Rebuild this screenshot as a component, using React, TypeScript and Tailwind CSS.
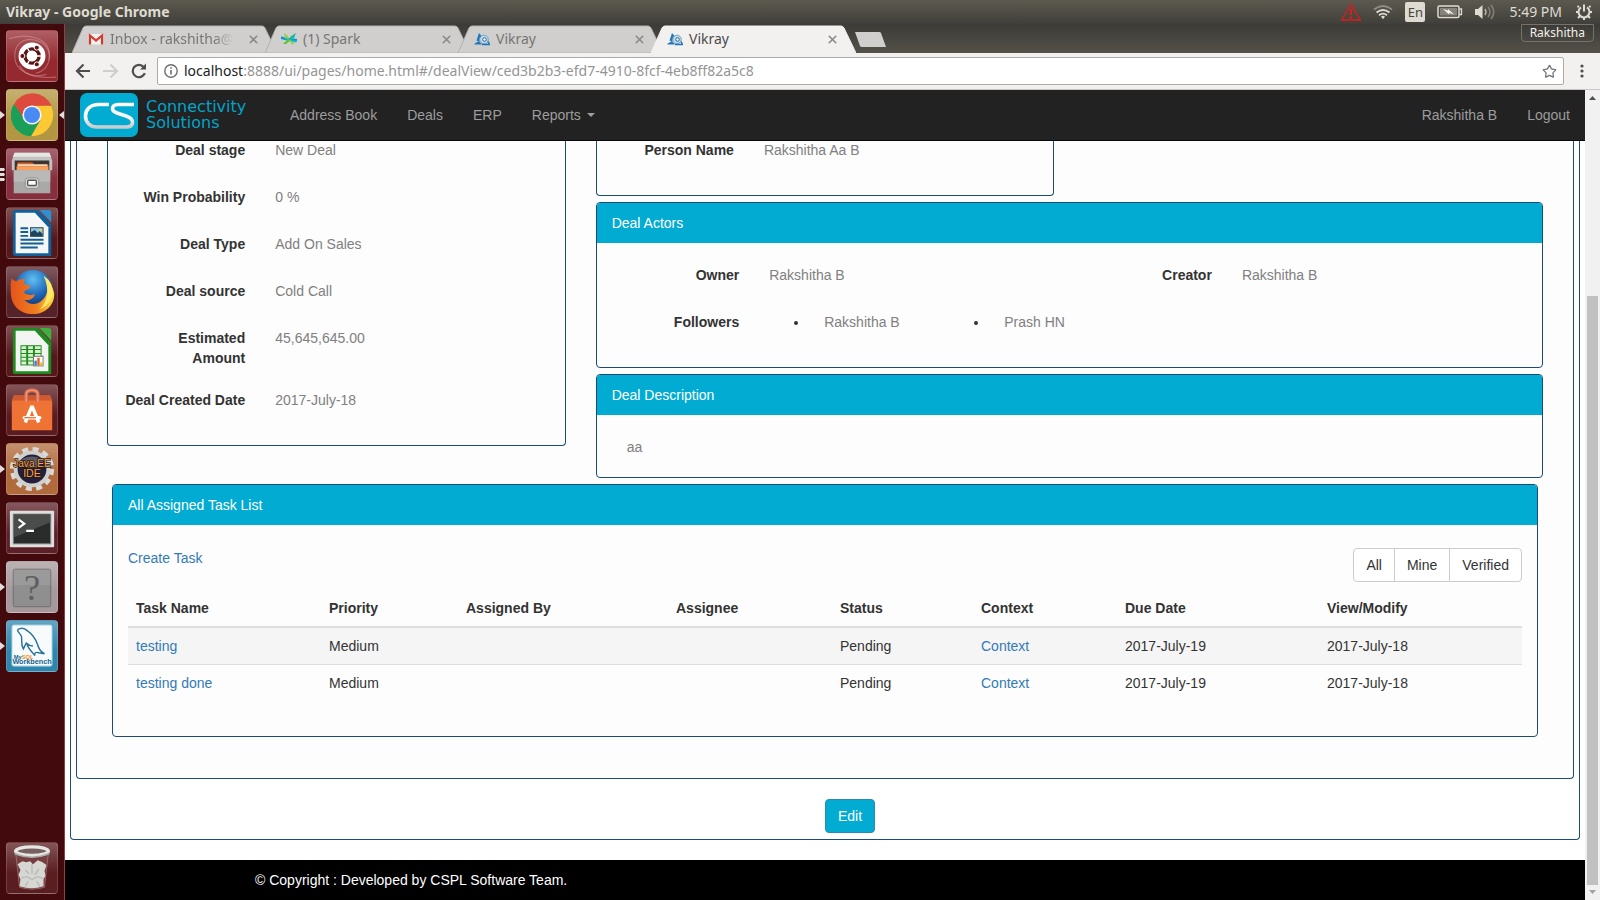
import type { ReactNode } from "react";
import { Star, X } from "lucide-react";

const uiFont = "font-['Noto_Sans','Open_Sans',sans-serif]";

/* ---------- launcher icons ---------- */

function UbuntuIcon() {
  return (
    <svg viewBox="0 0 52 52" className="h-full w-full">
      <g fill="none" stroke="#e9b5b5" strokeOpacity=".4" strokeWidth="1.2">
        <path d="M2 8C20 2 45 6 44 26c0 9-5 16-14 18" />
        <path d="M8 26C8 12 20 4 36 12c6 4 9 10 8 18" />
        <path d="M8 26c0 16 16 24 43 22" />
        <path d="M13 36c5 9 16 13 28 9" />
      </g>
      <circle cx="26" cy="26" r="14" fill="#fff" />
      <circle cx="26" cy="26" r="7.4" fill="none" stroke="#5e1414" strokeWidth="3.6" />
      <g stroke="#fff" strokeWidth="1.5">
        <path d="M26 26L37 26M26 26L20.5 16.5M26 26L20.5 35.5" />
      </g>
      <circle cx="26" cy="26" r="5.4" fill="#fff" />
      <g fill="#5e1414" stroke="#fff" strokeWidth="1">
        <circle cx="16" cy="26" r="2.6" />
        <circle cx="31" cy="17.3" r="2.6" />
        <circle cx="31" cy="34.7" r="2.6" />
      </g>
    </svg>
  );
}

function ChromeIcon() {
  return (
    <svg viewBox="0 0 52 52" className="h-full w-full">
      <circle cx="26" cy="26" r="22" fill="#fcc934" />
      <path d="M26 26L7 15A22 22 0 0 0 25 48L35 31z" fill="#1b9e58" />
      <path d="M26 26L7 15A22 22 0 0 1 46.500 16.500L26 16.500z" fill="#dd4b3e" />
      <path d="M7.500 14.500L17.500 30 20 16.500H40z" fill="#dd4b3e" />
      <path d="M7 15L17.500 31 L25 48A22 22 0 0 1 7 15z" fill="#1b9e58" />
      <circle cx="26" cy="26" r="10" fill="#f5f5f5" />
      <circle cx="26" cy="26" r="8.300" fill="#4a8af4" />
    </svg>
  );
}

function FilesIcon() {
  return (
    <svg viewBox="0 0 52 52" className="h-full w-full">
      <path d="M8 4h36l3 8v10H5V12z" fill="#c3c3c1" />
      <path d="M8 4h36l2 4H6z" fill="#e6e6e4" />
      <path d="M8 12h36v12H8z" fill="#3d3430" />
      <path d="M11 14h15l3 2h14v8H10z" fill="#d9622b" />
      <path d="M10 18h33v6H10z" fill="#f6a15d" />
      <path d="M11 16h31v1.500H11z" fill="#fff1dc" />
      <path d="M7 22h38v24H7z" fill="#a9a9a7" />
      <path d="M7 22h38v12H7z" fill="#b9b9b7" />
      <rect x="19" y="30" width="14" height="11" rx="3" fill="#d6d6d4" stroke="#8f8f8d" />
      <rect x="21.500" y="32.500" width="9" height="5.500" rx="1" fill="#fff" stroke="#555" strokeWidth="1.400" />
    </svg>
  );
}

function WriterIcon() {
  return (
    <svg viewBox="0 0 52 52" className="h-full w-full">
      <path d="M9 2h23l14 15v33H9q-3 0-3-3V5q0-3 3-3z" fill="#0f609b" />
      <path d="M9 5h20l14 15v27H9z" fill="#f5f6f6" />
      <path d="M34 2h9q3 0 3 3v10z" fill="#2f8fd0" />
      <g stroke="#145f97" strokeWidth="2">
        <path d="M14 21h8M14 25h8M14 29h8M14 33h24M14 37h24M14 41h18" />
      </g>
      <rect x="24.500" y="20.500" width="13" height="9" fill="#8ec8ec" stroke="#2b4257" />
      <path d="M25 29v-4l4-2 3 3 2-2 3 3v2z" fill="#20435c" />
      <circle cx="35" cy="23" r="1.500" fill="#f3cf45" />
    </svg>
  );
}

function FirefoxIcon() {
  return (
    <svg viewBox="0 0 52 52" className="h-full w-full">
      <defs>
        <radialGradient id="ffGlobe" cx=".5" cy=".25" r=".7">
          <stop offset="0" stopColor="#5ec0f2" />
          <stop offset=".6" stopColor="#1f66b8" />
          <stop offset="1" stopColor="#12356f" />
        </radialGradient>
        <linearGradient id="ffFox" x1="0" y1="0" x2="1" y2="0">
          <stop offset="0" stopColor="#e4541b" />
          <stop offset=".6" stopColor="#f08020" />
          <stop offset="1" stopColor="#ffe13e" />
        </linearGradient>
      </defs>
      <circle cx="27" cy="23" r="20" fill="url(#ffGlobe)" />
      <path
        d="M5 12c1 1 3 3 5 3 2-2 6-3 9-2-2 2-2 4-1 5l5 1c2 1 1 3-1 4-3 1-4 2-4 4 3 2 7 3 11 1-1 5-6 7-11 6 4 5 12 6 17 2 8-6 9-16 5-23 5 4 8 9 9 14 1 12-9 22-22 22C13 49 4 39 4 27c0-6-1-9 1-15z"
        fill="url(#ffFox)"
      />
      <path d="M38 9c8 5 11 13 9 21-2 7-7 12-13 14 8-7 11-20 4-35z" fill="#ffe866" />
    </svg>
  );
}

function CalcIcon() {
  return (
    <svg viewBox="0 0 52 52" className="h-full w-full">
      <path d="M9 2h23l14 15v33H9q-3 0-3-3V5q0-3 3-3z" fill="#1f8a1f" />
      <path d="M9 5h20l14 15v27H9z" fill="#f3f5f3" />
      <path d="M34 2h9q3 0 3 3v10z" fill="#3fb03a" />
      <rect x="14" y="20" width="22" height="21" fill="#1f8a1f" />
      <g fill="#d9f2d0">
        <path d="M15 21h5v3h-5zM22 21h5v3h-5zM29 21h6v3h-6zM15 25h5v3h-5zM22 25h5v3h-5zM29 25h6v3h-6zM15 29h5v3h-5zM22 29h5v3h-5zM29 29h6v3h-6zM15 33h5v3h-5zM22 33h5v3h-5zM15 37h5v3h-5zM22 37h5v3h-5z" />
      </g>
      <rect x="27.500" y="31.500" width="10" height="10" fill="#fff" stroke="#777" />
      <path d="M28.500 36h2.500v5h-2.500z" fill="#2a83d0" />
      <path d="M31.500 33h2.500v8h-2.500z" fill="#e8641e" />
      <path d="M34.500 38h2.500v3h-2.500z" fill="#f0b81c" />
    </svg>
  );
}

function SoftwareIcon() {
  return (
    <svg viewBox="0 0 52 52" className="h-full w-full">
      <path d="M7 11h38l2 7v29H5V18z" fill="#ee7334" />
      <path d="M7 11h38l2 5H5z" fill="#cf5a30" />
      <path d="M20 18V10q0-4.500 6-4.500t6 4.500v8" fill="none" stroke="#d96c4c" strokeWidth="4" />
      <path d="M20 18V10q0-4.500 6-4.500t6 4.500v8" fill="none" stroke="#f0957a" strokeWidth="1.500" />
      <g stroke="#fff" strokeWidth="3.600" fill="none">
        <path d="M19 39L25.500 23h1L33 39" />
        <path d="M18 34H34" strokeLinecap="round" />
      </g>
      <path d="M18 34h12" stroke="#ee7334" strokeWidth="1.400" />
    </svg>
  );
}

function EclipseIcon() {
  return (
    <svg viewBox="0 0 52 52" className="h-full w-full">
      <circle cx="26" cy="26" r="20" fill="none" stroke="#d9d9d7" strokeWidth="6" strokeDasharray="6 4.470" />
      <circle cx="26" cy="26" r="17" fill="#22203a" stroke="#cfcfcd" strokeWidth="4" />
      <ellipse cx="26" cy="19" rx="12" ry="6" fill="#5d5a68" />
      <g fill="#f5a35a" stroke="#2a1608" strokeWidth="1.500" paintOrder="stroke" fontFamily="Liberation Sans, sans-serif" textAnchor="middle">
        <text x="26" y="24" fontSize="10.500">Java EE</text>
        <text x="26" y="34" fontSize="11">IDE</text>
      </g>
    </svg>
  );
}

function TerminalIcon() {
  return (
    <svg viewBox="0 0 52 52" className="h-full w-full">
      <rect x="3" y="8" width="46" height="38" rx="1" fill="#dededc" />
      <rect x="6.500" y="11.500" width="39" height="31" fill="#2a2c2b" stroke="#8b8b8b" />
      <path d="M7 12h38v8L7 36z" fill="#4a4c4b" />
      <path d="M12 17l6 4.500-6 4.500M20 29h8" fill="none" stroke="#fff" strokeWidth="2.200" />
    </svg>
  );
}

function UnknownIcon() {
  return (
    <svg viewBox="0 0 52 52" className="h-full w-full">
      <rect x="6.500" y="7.500" width="39" height="39" rx="2" fill="#8f8f8f" stroke="#6d6d6d" />
      <path d="M7 8h38v16H7z" fill="#9a9a9a" />
      <text x="26" y="39" fontSize="38" textAnchor="middle" fill="#5f5f5f" fontFamily="Liberation Serif, serif">
        ?
      </text>
    </svg>
  );
}

function WorkbenchIcon() {
  return (
    <svg viewBox="0 0 52 52" className="h-full w-full">
      <rect x="5" y="4" width="42" height="43" rx="2" fill="#f8fbfc" stroke="#7ab8d6" />
      <path
        d="M11 9c3-2 7-2 10 1 6 4 9 9 11 15 1 4 3 7 7 9l-6-1c-3-1-5 0-4 3-3-4-6-6-8-11M11 9c0 3 3 4 4 7 1 4-1 8 2 13l3-6c2 2 4 3 7 3"
        fill="none"
        stroke="#2a7297"
        strokeWidth="1.500"
      />
      <g fontFamily="Liberation Sans, sans-serif" fontWeight="700">
        <text x="7" y="39" fontSize="6" fill="#12628c">
          My<tspan fill="#ee9020">SQL</tspan>
        </text>
        <text x="26" y="45" fontSize="7.500" fill="#12628c" textAnchor="middle">
          Workbench
        </text>
      </g>
    </svg>
  );
}

function TrashIcon() {
  return (
    <svg viewBox="0 0 52 52" className="h-full w-full">
      <path d="M9 10l4 36q13 4 26 0l4-36z" fill="#7d4548" fillOpacity=".6" stroke="#a98082" strokeOpacity=".7" />
      <path
        d="M11 22l5-3 4 1 4-1 3 3 5-4 5 2 4 3-2 6 1 5-2 4v7q-12 4-25 0l1-7-2-5 2-5z"
        fill="#d6d7d3"
      />
      <path d="M26 22v10M19 28l4 4M33 27l-4 6M15 36l6-1 5 3 6-3 6 2M22 40l-3 5M31 40l3 5" fill="none" stroke="#b9bbb6" strokeWidth="1.500" />
      <ellipse cx="26" cy="8.500" rx="17" ry="4.500" fill="#77605f" stroke="#e4e6e2" strokeWidth="3.500" />
      <path d="M8 10q18 8 36 0v2q-18 7-36 0z" fill="#a9aba6" />
    </svg>
  );
}

type Tile = { name: string; tone: string; icon: ReactNode; left?: boolean; stack?: boolean; right?: boolean };

const tiles: Tile[] = [
  { name: "Search your computer", tone: "bg-[#942a30]", icon: <UbuntuIcon /> },
  { name: "Google Chrome", tone: "bg-[#b39642]", icon: <ChromeIcon />, left: true, right: true },
  { name: "Files", tone: "bg-[#86303f]", icon: <FilesIcon />, stack: true },
  { name: "LibreOffice Writer", tone: "bg-[#55191c]", icon: <WriterIcon /> },
  { name: "Firefox", tone: "bg-[#55222a]", icon: <FirefoxIcon /> },
  { name: "LibreOffice Calc", tone: "bg-[#55191c]", icon: <CalcIcon /> },
  { name: "Ubuntu Software", tone: "bg-[#5a1c20]", icon: <SoftwareIcon /> },
  { name: "Eclipse", tone: "bg-[#b06a3c]", icon: <EclipseIcon />, left: true },
  { name: "Terminal", tone: "bg-[#5c2029]", icon: <TerminalIcon /> },
  { name: "Unknown application", tone: "bg-[#a5999b]", icon: <UnknownIcon />, left: true },
  { name: "MySQL Workbench", tone: "bg-[#2f86ad]", icon: <WorkbenchIcon />, left: true },
];

function LauncherTile({ tile }: { tile: Tile }) {
  return (
    <button
      aria-label={tile.name}
      className={`relative block size-[52px] shrink-0 rounded border border-white/15 bg-linear-to-b from-white/25 to-transparent to-60% ${tile.tone}`}
    >
      {tile.icon}
      {tile.left && (
        <svg viewBox="0 0 5 8" className="absolute top-[21px] -left-[7px] h-2 w-[5px]">
          <path d="M0 0l5 4-5 4z" fill="#e3dede" />
        </svg>
      )}
      {tile.stack && (
        <svg viewBox="0 0 5 13" className="absolute top-[19px] -left-[7px] h-[13px] w-[5px]">
          <path d="M0 0h4l1 1.500-1 1.500H0zM0 5h4l1 1.500L4 8H0zM0 10h4l1 1.500-1 1.500H0z" fill="#e3dede" />
        </svg>
      )}
      {tile.right && (
        <svg viewBox="0 0 5 8" className="absolute top-[21px] -right-[7px] h-2 w-[5px]">
          <path d="M5 0L0 4l5 4z" fill="#e3dede" />
        </svg>
      )}
    </button>
  );
}

function Launcher() {
  return (
    <nav aria-label="Launcher" className="flex w-[65px] shrink-0 flex-col gap-[7px] border-r border-[#8d4144] bg-[#420a0c] px-1.5 py-1.5">
      {tiles.map((t) => (
        <LauncherTile key={t.name} tile={t} />
      ))}
      <div className="mt-auto">
        <LauncherTile tile={{ name: "Trash", tone: "bg-[#5a1d20]", icon: <TrashIcon /> }} />
      </div>
    </nav>
  );
}

/* ---------- top panel ---------- */

function TopPanel() {
  return (
    <header
      className={`flex h-6 shrink-0 items-center bg-linear-to-b from-[#5c5a4f] to-[#403f3a] pr-2 pl-1.5 text-[#dfdbd2] ${uiFont}`}
    >
      <h1 className="text-[14px] leading-6 font-bold">Vikray - Google Chrome</h1>
      <div className="ml-auto flex items-center">
        <svg viewBox="0 0 20 18" className="mr-3 h-[18px] w-5" fill="none" stroke="#e01b1b" strokeWidth="1.300">
          <path d="M10 1L19.300 17H.700z" />
          <path d="M10 6v6M10 13.500v2" strokeWidth="2.200" />
        </svg>
        <svg viewBox="0 0 20 16" className="mr-3 h-4 w-5" fill="none" strokeWidth="1.800">
          <path d="M1 5.500Q10-1.500 19 5.500" stroke="#8f8d85" />
          <path d="M3.500 8.500q6.500-5 13 0" stroke="#dfdbd2" />
          <path d="M6 11.200q4-3 8 0" stroke="#dfdbd2" />
          <path d="M8 12.500q2-1.500 4 0l-2 2.700z" fill="#dfdbd2" />
        </svg>
        <span className="mr-3 flex h-5 w-5 items-center justify-center rounded-xs bg-[#dfdbd2] text-[13px] text-[#45443e]">
          En
        </span>
        <svg viewBox="0 0 26 14" className="mr-3 h-3.5 w-[26px]">
          <rect x="1" y="1" width="21" height="11.500" rx="1.500" fill="none" stroke="#dfdbd2" strokeWidth="1.500" />
          <rect x="3" y="3" width="17" height="7.500" fill="#85837b" />
          <path d="M22.500 4h2v5.500h-2" fill="none" stroke="#dfdbd2" strokeWidth="1.300" />
          <path d="M6 4l5 1.500V4l6 5.500-5-1.500v1.500z" fill="#f4f1ea" />
        </svg>
        <svg viewBox="0 0 20 16" className="mr-3.5 h-4 w-5" fill="none">
          <path d="M0 5h3l4.500-4v14L3 11H0z" fill="#dfdbd2" />
          <path d="M10 5q2 3 0 6" stroke="#b3b0a8" strokeWidth="1.500" />
          <path d="M13 3q4 5 0 10M16 1q5.500 7 0 14" stroke="#85837b" strokeWidth="1.500" />
        </svg>
        <time className="mr-3.5 text-[14px] leading-6">5:49 PM</time>
        <svg viewBox="0 0 16 16" className="h-4 w-4" fill="none" stroke="#dfdbd2">
          <path d="M5 3.300a5.500 5.500 0 1 0 6 0" strokeWidth="2" />
          <path d="M8 .500v7" strokeWidth="2" />
          <path d="M2.800 3.200L1.500 1.900M13.200 3.200l1.300-1.300M2.500 8H0M16 8h-2.500M4 12l-2 2M12 12l2 2M8 13.500V16" strokeWidth="2" />
        </svg>
      </div>
    </header>
  );
}

/* ---------- browser chrome ---------- */

function GmailIcon() {
  return (
    <svg viewBox="0 0 16 16" className="size-4">
      <path d="M1 3h14v10.500H1z" fill="#f1f1f1" />
      <path d="M2 13.500V4.500l6 5 6-5v9" fill="none" stroke="#d8392b" strokeWidth="2.200" />
    </svg>
  );
}

function SparkIcon() {
  return (
    <svg viewBox="0 0 16 16" className="size-4">
      <path d="M0 5.500L8 7l8 1v2.500L8 10 0 8z" fill="#0b8fd6" />
      <path d="M0 6l16 3.500-1 2L6 9z" fill="#0fb5c9" />
      <path d="M9 6l6-4-2 5-4 1z" fill="#19b79a" />
      <path d="M2 13l5-5 3 1-5 4z" fill="#5cc23d" />
      <path d="M3 2l4 3 1 3-4-1zM9 9l4 3-1 2-4-4z" fill="#8fd14b" />
    </svg>
  );
}

function FishIcon() {
  return (
    <svg viewBox="0 0 16 16" className="size-4" fill="none">
      <path d="M2.500 9.500L5 2l3 3.500-3 5zM0 13l5-3 3 3.500H1z" fill="#2277ba" />
      <circle cx="10" cy="8.500" r="4.300" fill="#c4dae8" stroke="#6fa3c6" />
      <circle cx="10.500" cy="8.500" r="1.800" fill="#e6f1f7" stroke="#2b6a97" />
      <path d="M8 13.500h7.500l-1.500-3" stroke="#2277ba" strokeWidth="1.500" />
    </svg>
  );
}

function Tab({ icon, title, active, first }: { icon: ReactNode; title: string; active?: boolean; first?: boolean }) {
  return (
    <div className={`relative flex h-7 w-[205px] items-center pr-[17px] pl-4 ${first ? "" : "-ml-3"}`}>
      <svg viewBox="0 0 205 28" preserveAspectRatio="none" className="absolute inset-0 h-full w-full">
        <path
          d="M0 28L11 3Q12 1 14 1H190Q192 1 193 3L205 28z"
          fill={active ? "#f2f1ef" : "#d0cfcd"}
          stroke={active ? "#f2f1ef" : "#b3b1ad"}
        />
      </svg>
      <a
        href="#tab"
        className={`relative flex min-w-0 flex-1 items-center gap-1.5 text-[14px] leading-7 ${active ? "text-[#4b4b4b]" : "text-[#777674]"}`}
      >
        <span className="shrink-0">{icon}</span>
        <span className={`whitespace-nowrap ${first ? "mask-r-from-85%" : ""}`}>{title}</span>
      </a>
      <button aria-label="Close tab" className="relative ml-2 text-[#8a8988]">
        <X size={13} strokeWidth={3} />
      </button>
    </div>
  );
}

function BrowserChrome() {
  return (
    <div className={`shrink-0 ${uiFont}`}>
      <div className="flex h-[29px] items-end bg-linear-to-b from-[#3c3b37] to-[#545149] pl-[7px]">
        <Tab first icon={<GmailIcon />} title="Inbox - rakshitha@" />
        <Tab icon={<SparkIcon />} title="(1) Spark" />
        <Tab icon={<FishIcon />} title="Vikray" />
        <Tab active icon={<FishIcon />} title="Vikray" />
        <button aria-label="New tab" className="-ml-0.5 mb-1.5 h-[15px] w-8 self-end">
          <svg viewBox="0 0 32 15" className="h-full w-full">
            <path d="M1 0H25q1.500 0 2 1L32 15H8q-1.500 0-2-1z" fill="#d0cfcd" />
          </svg>
        </button>
        <button className="mr-1.5 ml-auto h-[18px] self-start rounded-b border border-[#75736b] px-2 text-[12px] leading-4 text-[#f3f1ec]">
          Rakshitha
        </button>
      </div>
      <div className="flex h-[37px] items-center border-b border-[#c9c8c2] bg-[#f2f1ef] pr-4 pl-2.5">
        <button aria-label="Back" className="mr-3">
          <svg viewBox="0 0 16 16" className="size-4" fill="none" stroke="#4d4d4d" strokeWidth="2.200">
            <path d="M15 8H2.500M8.500 1.500L2 8l6.500 6.500" />
          </svg>
        </button>
        <button aria-label="Forward" className="mr-3">
          <svg viewBox="0 0 16 16" className="size-4" fill="none" stroke="#cfcecc" strokeWidth="2.200">
            <path d="M0 8h13.500M7.500 1.500L14 8l-6.500 6.500" />
          </svg>
        </button>
        <button aria-label="Reload" className="mr-2.5">
          <svg viewBox="0 0 16 16" className="size-4" fill="none" stroke="#4d4d4d" strokeWidth="2.200">
            <path d="M13.800 10.200A6.200 6.200 0 1 1 12.700 4" />
            <path d="M15 .500v6H9z" fill="#4d4d4d" stroke="none" />
          </svg>
        </button>
        <div className="flex h-7 flex-1 items-center rounded-xs border border-[#acaba8] bg-white px-1.5 text-[14px]">
          <svg viewBox="0 0 14 14" className="mr-1.5 size-3.5" fill="none" stroke="#6f6f6f" strokeWidth="1.400">
            <circle cx="7" cy="7" r="6.200" />
            <path d="M7 6v4.500M7 3.300v1.500" strokeWidth="1.600" />
          </svg>
          <span className="flex-1 leading-6 text-[#959595]">
            <span className="text-[#222]">localhost</span>
            :8888/ui/pages/home.html#/dealView/ced3b2b3-efd7-4910-8fcf-4eb8ff82a5c8
          </span>
          <button aria-label="Bookmark this page" className="text-[#737373]">
            <Star size={15} strokeWidth={2} />
          </button>
        </div>
        <button aria-label="Menu" className="ml-4">
          <svg viewBox="0 0 4 14" className="h-3.5 w-1" fill="#4d4d4d">
            <circle cx="2" cy="2" r="1.600" />
            <circle cx="2" cy="7" r="1.600" />
            <circle cx="2" cy="12" r="1.600" />
          </svg>
        </button>
      </div>
    </div>
  );
}

/* ---------- application ---------- */

function CsMark() {
  return (
    <svg viewBox="0 0 58 44" className="h-11 w-[58px]">
      <defs>
        <linearGradient id="csStroke" x1="0" y1="0" x2="0" y2="1">
          <stop offset="0" stopColor="#fff" />
          <stop offset=".6" stopColor="#f4f4f4" />
          <stop offset="1" stopColor="#c9ccce" />
        </linearGradient>
      </defs>
      <rect width="58" height="44" rx="7" fill="#02abd1" />
      <path
        d="M29 11.500H19C10 11.500 5.500 16.500 5.500 23S10 34 17 34H46C50.500 34 52.500 32 52.500 29.500S50.500 24.500 46 23L37 20C34 19 32.500 17.500 32.500 15.500S34.500 11.500 38 11.500H54"
        fill="none"
        stroke="url(#csStroke)"
        strokeWidth="3.600"
      />
    </svg>
  );
}

function Navbar() {
  return (
    <nav className="relative flex h-[51px] shrink-0 items-center border-b border-[#080808] bg-[#222] pl-[15px] text-[#9d9d9d]">
      <a href="#home" className="flex w-[195px] items-center gap-2">
        <CsMark />
        <span className="font-['DejaVu_Sans',sans-serif] text-[16px] leading-4 text-[#02a3c8]">
          <span className="block">Connectivity</span>
          <span className="block">Solutions</span>
        </span>
      </a>
      <a href="#address-book" className="px-[15px]">Address Book</a>
      <a href="#deals" className="px-[15px]">Deals</a>
      <a href="#erp" className="px-[15px]">ERP</a>
      <a href="#reports" className="flex items-center px-[15px]">
        Reports
        <svg viewBox="0 0 8 4" className="ml-1.5 h-1 w-2">
          <path d="M0 0h8L4 4z" fill="#9d9d9d" />
        </svg>
      </a>
      <a href="#profile" className="ml-auto px-[15px]">Rakshitha B</a>
      <a href="#logout" className="px-[15px]">Logout</a>
    </nav>
  );
}

function Field({ label, children }: { label: string; children: ReactNode }) {
  return (
    <div className="mb-[15px] grid min-h-8 grid-cols-3 pt-[7px]">
      <dt className="px-[15px] text-right font-bold">{label}</dt>
      <dd className="col-span-2 px-[15px] text-[#808080]">{children}</dd>
    </div>
  );
}

function Panel({ title, className, children }: { title: string; className: string; children: ReactNode }) {
  return (
    <section className={`overflow-hidden rounded border border-[#1c4b78] ${className}`}>
      <h2 className="bg-[#02abd1] px-[15px] py-2.5 text-white">{title}</h2>
      {children}
    </section>
  );
}

const tasks = [
  { name: "testing", priority: "Medium", status: "Pending", due: "2017-July-19", modified: "2017-July-18" },
  { name: "testing done", priority: "Medium", status: "Pending", due: "2017-July-19", modified: "2017-July-18" },
];

function TaskTable() {
  const th = "border-b-2 border-[#ddd] p-2 text-left font-bold";
  return (
    <table className="w-full table-fixed border-separate border-spacing-0">
      <colgroup>
        <col className="w-[193px]" />
        <col className="w-[137px]" />
        <col className="w-[210px]" />
        <col className="w-[164px]" />
        <col className="w-[141px]" />
        <col className="w-[144px]" />
        <col className="w-[202px]" />
        <col className="w-[203px]" />
      </colgroup>
      <thead>
        <tr>
          <th className={th}>Task Name</th>
          <th className={th}>Priority</th>
          <th className={th}>Assigned By</th>
          <th className={th}>Assignee</th>
          <th className={th}>Status</th>
          <th className={th}>Context</th>
          <th className={th}>Due Date</th>
          <th className={th}>View/Modify</th>
        </tr>
      </thead>
      <tbody className="[&_td]:p-2 [&>tr+tr>td]:border-t [&>tr+tr>td]:border-[#ddd]">
        {tasks.map((t) => (
          <tr key={t.name} className="odd:bg-[#f5f5f5]">
            <td><a href="#task" className="text-[#337ab7]">{t.name}</a></td>
            <td>{t.priority}</td>
            <td />
            <td />
            <td>{t.status}</td>
            <td><a href="#context" className="text-[#337ab7]">Context</a></td>
            <td>{t.due}</td>
            <td>{t.modified}</td>
          </tr>
        ))}
      </tbody>
    </table>
  );
}

function DealView() {
  return (
    <main className="-mt-2 flex-1">
      <div className="mx-[5px] rounded-b border-x border-b border-[#1c4b78] px-[5px] pb-1.5">
        <div className="rounded-b border-x border-b border-[#1c4b78] bg-[#fdfdfd] px-[15px] pb-[41px]">
          <div className="grid grid-cols-3 items-start">
            <dl className="mx-[15px] rounded-b border-x border-b border-[#1c4b78] pb-[15px]">
              <Field label="Deal stage">New Deal</Field>
              <Field label="Win Probability">0 %</Field>
              <Field label="Deal Type">Add On Sales</Field>
              <Field label="Deal source">Cold Call</Field>
              <Field label="Estimated Amount">45,645,645.00</Field>
              <Field label="Deal Created Date">2017-July-18</Field>
            </dl>
            <div className="col-span-2 px-[15px]">
              <div className="grid grid-cols-2 gap-[30px]">
                <dl className="mb-1.5 rounded-b border-x border-b border-[#1c4b78] pb-[15px]">
                  <Field label="Person Name">Rakshitha Aa B</Field>
                </dl>
              </div>
              <Panel title="Deal Actors" className="mb-1.5">
                <dl className="grid grid-cols-2 py-[15px]">
                  <Field label="Owner">Rakshitha B</Field>
                  <Field label="Creator">Rakshitha B</Field>
                  <div className="col-span-2 mb-[15px] grid min-h-8 grid-cols-6 pt-[7px]">
                    <dt className="px-[15px] text-right font-bold">Followers</dt>
                    <dd className="col-span-5 px-[15px]">
                      <ul className="flex list-disc pl-10">
                        <li className="w-[180px] pl-[15px]"><span className="text-[#808080]">Rakshitha B</span></li>
                        <li className="w-[180px] pl-[15px]"><span className="text-[#808080]">Prash HN</span></li>
                      </ul>
                    </dd>
                  </div>
                </dl>
              </Panel>
              <Panel title="Deal Description" className="mb-1.5">
                <p className="px-[30px] pt-[22px] pb-5 text-[#808080]">aa</p>
              </Panel>
            </div>
          </div>
          <Panel title="All Assigned Task List" className="mx-5">
            <div className="px-[15px] pt-[23px] pb-[35px]">
              <div className="mb-2 flex items-start justify-between">
                <a href="#create-task" className="text-[#337ab7]">Create Task</a>
                <div role="group" aria-label="Task filter" className="flex divide-x divide-[#ccc] rounded border border-[#ccc] bg-white">
                  <button className="px-3 py-1.5">All</button>
                  <button className="px-3 py-1.5">Mine</button>
                  <button className="px-3 py-1.5">Verified</button>
                </div>
              </div>
              <TaskTable />
            </div>
          </Panel>
        </div>
        <div className="flex justify-center pt-5 pl-[50px]">
          <button className="rounded border border-[#2e86b5] bg-[#02abd1] px-3 py-1.5 text-white">Edit</button>
        </div>
      </div>
    </main>
  );
}

function ScrollRail() {
  return (
    <div aria-hidden="true" className="flex w-[15px] shrink-0 flex-col items-center bg-[#f1f1f1]">
      <svg viewBox="0 0 15 15" className="size-[15px] shrink-0">
        <path d="M4 10h7L7.500 6z" fill="#505050" />
      </svg>
      <div className="flex w-full flex-1 flex-col px-0.5">
        <div className="grow-[191]" />
        <div className="grow-[589] bg-[#c1c1c1]" />
      </div>
      <svg viewBox="0 0 15 15" className="size-[15px] shrink-0">
        <path d="M4 5h7L7.500 9z" fill="#a3a3a3" />
      </svg>
    </div>
  );
}

export default function App() {
  return (
    <div className="flex h-screen flex-col overflow-hidden bg-white font-['Liberation_Sans',Arial,sans-serif] text-[14px] leading-5 text-[#333]">
      <TopPanel />
      <div className="flex min-h-0 flex-1">
        <Launcher />
        <div className="flex min-w-0 flex-1 flex-col">
          <BrowserChrome />
          <div className="flex min-h-0 flex-1">
            <div className="flex min-w-0 flex-1 flex-col overflow-hidden">
              <Navbar />
              <DealView />
              <footer className="h-10 shrink-0 bg-black pl-[190px] leading-10 text-white">
                © Copyright : Developed by CSPL Software Team.
              </footer>
            </div>
            <ScrollRail />
          </div>
        </div>
      </div>
    </div>
  );
}
